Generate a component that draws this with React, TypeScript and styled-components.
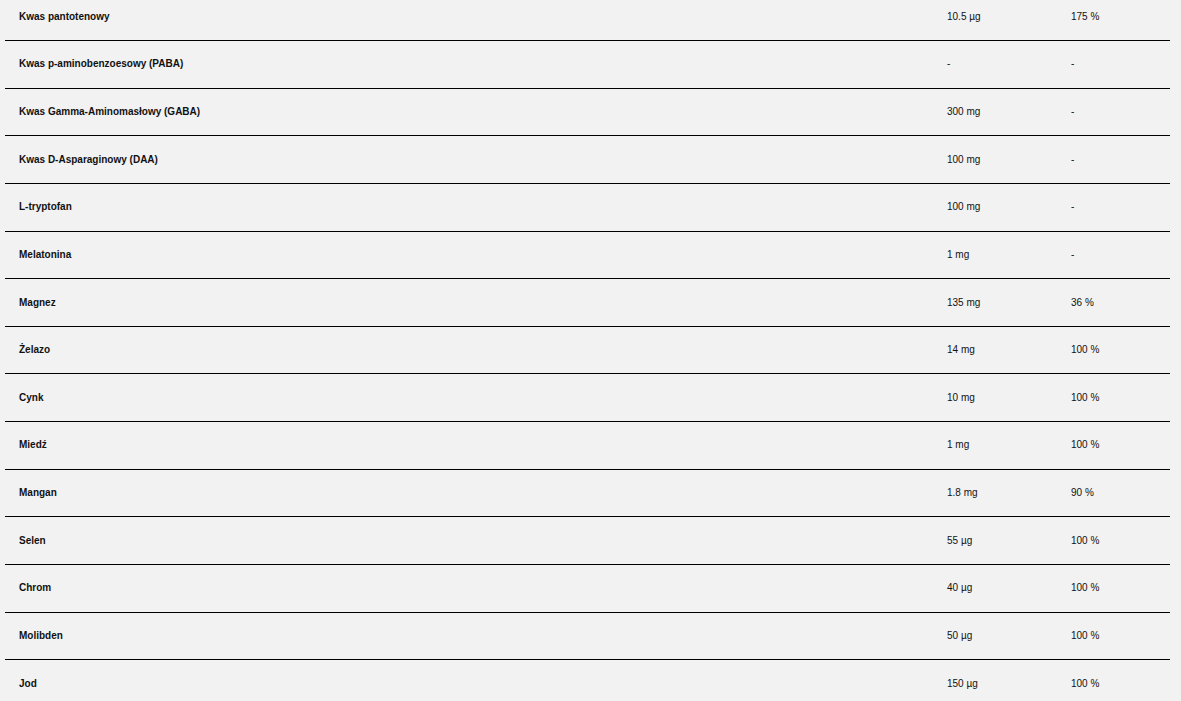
import React from "react";
import styled, { createGlobalStyle } from "styled-components";

const Global = createGlobalStyle`
  html, body { margin: 0; padding: 0; background: #f2f2f2; }
  body { font-family: "Liberation Sans", Arial, sans-serif; color: #111; overflow: hidden; }
`;

const Table = styled.div`
  margin: -6.65px 0 0 5px;
  width: 1165px;
  display: flex;
  flex-direction: column;
`;

const Row = styled.div`
  display: grid;
  grid-template-columns: 928px 124px 113px;
  align-items: center;
  height: 47.65px;
  box-sizing: border-box;
  border-bottom: 1px solid #000;
`;

const Cell = styled.div<{ $bold?: boolean }>`
  padding-left: 14px;
  font-size: 10px;
  line-height: 12px;
  font-weight: ${(p) => (p.$bold ? 700 : 400)};
  white-space: nowrap;
`;

const rows: [string, string, string][] = [
  ["Kwas pantotenowy", "10.5 µg", "175 %"],
  ["Kwas p-aminobenzoesowy (PABA)", "-", "-"],
  ["Kwas Gamma-Aminomasłowy (GABA)", "300 mg", "-"],
  ["Kwas D-Asparaginowy (DAA)", "100 mg", "-"],
  ["L-tryptofan", "100 mg", "-"],
  ["Melatonina", "1 mg", "-"],
  ["Magnez", "135 mg", "36 %"],
  ["Żelazo", "14 mg", "100 %"],
  ["Cynk", "10 mg", "100 %"],
  ["Miedź", "1 mg", "100 %"],
  ["Mangan", "1.8 mg", "90 %"],
  ["Selen", "55 µg", "100 %"],
  ["Chrom", "40 µg", "100 %"],
  ["Molibden", "50 µg", "100 %"],
  ["Jod", "150 µg", "100 %"],
];

export default function App() {
  return (
    <>
      <Global />
      <Table>
        {rows.map(([name, amount, pct]) => (
          <Row key={name}>
            <Cell $bold>{name}</Cell>
            <Cell>{amount}</Cell>
            <Cell>{pct}</Cell>
          </Row>
        ))}
      </Table>
    </>
  );
}
